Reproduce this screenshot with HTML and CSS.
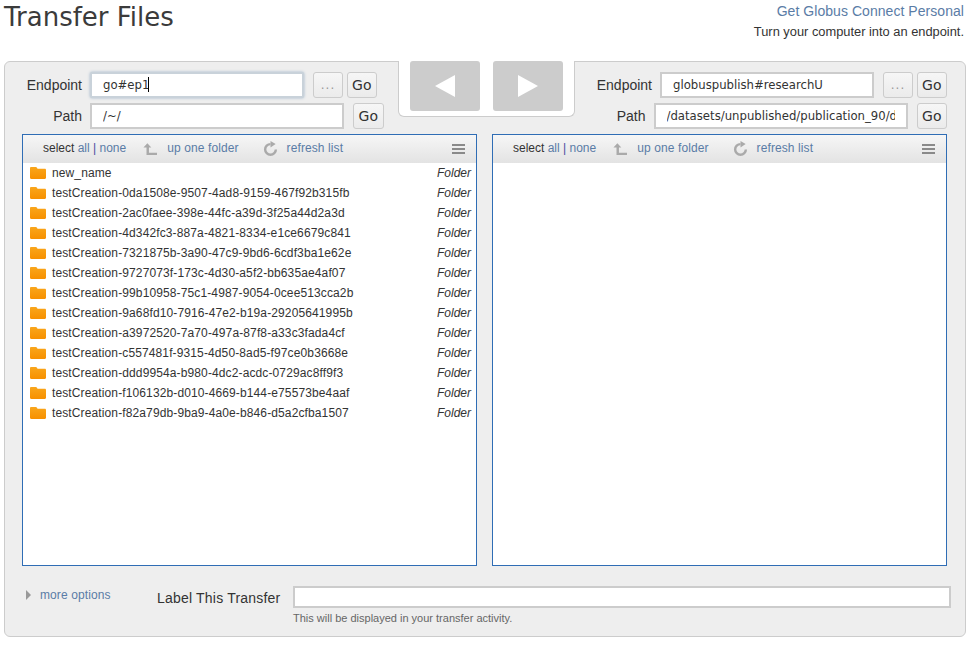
FILE: index.html
```html
<!DOCTYPE html>
<html lang="en">
<head>
    <meta charset="UTF-8">
    <title>Transfer Files</title>
    <link rel="stylesheet" href="styles.css">
</head>
<body>
    <svg class="defs" width="0" height="0">
        <symbol id="i-folder" viewBox="0 0 16 12">
            <defs>
                <linearGradient id="folder-grad" x1="0" y1="0" x2="0" y2="1">
                    <stop offset="0" stop-color="#f9a61c"/>
                    <stop offset="1" stop-color="#f79000"/>
                </linearGradient>
            </defs>
            <path d="M0 1.200C0 .5.5 0 1.200 0h4.600c.6 0 .9.3 1.200.8l.5.9h7.300c.7 0 1.200.5 1.200 1.200v7.900c0 .7-.5 1.200-1.200 1.200H1.200C.5 12 0 11.500 0 10.800z" fill="url(#folder-grad)"/>
        </symbol>
        <symbol id="i-up" viewBox="0 0 16 14">
            <path d="M5 0 9.500 5H6.800v6H16v3H4V5H.5z" fill="#aaa"/>
        </symbol>
        <symbol id="i-refresh" viewBox="0 0 16 16">
            <path d="M8 2A7 7 0 1 0 15 9H12.400A4.400 4.400 0 1 1 8 4.600z" fill="#aaa"/>
            <path d="M8 0l5.500 3.300L8 7z" fill="#aaa"/>
        </symbol>
        <symbol id="i-menu" viewBox="0 0 13 10">
            <path d="M0 0h13v2H0zM0 4h13v2H0zM0 8h13v2H0z" fill="#8a8a8a"/>
        </symbol>
    </svg>

    <header class="page-head">
        <h1>Transfer Files</h1>
        <div class="promo">
            <a href="#">Get Globus Connect Personal</a>
            <p>Turn your computer into an endpoint.</p>
        </div>
    </header>

    <main class="panel">
        <!-- flechas de transferencia -->
        <div class="arrows">
            <button class="arrow-btn"><span class="tri tri-left"></span></button>
            <button class="arrow-btn"><span class="tri tri-right"></span></button>
        </div>

        <div class="columns">
            <!-- lado izquierdo -->
            <section class="side">
                <div class="field-row">
                    <label class="lbl">Endpoint</label>
                    <span class="caret-wrap">
                        <input class="field field-short is-focus" value="go#ep1">
                        <span class="caret"></span>
                    </span>
                    <button class="btn btn-dots">...</button>
                    <button class="btn">Go</button>
                </div>
                <div class="field-row">
                    <label class="lbl">Path</label>
                    <input class="field field-long" value="/~/">
                    <button class="btn">Go</button>
                </div>
                <div class="pane">
                    <div class="pane-bar">
                        <span class="sel">select <a href="#">all</a> <b>|</b> <a href="#">none</a></span>
                        <svg class="ic-up"><use href="#i-up"/></svg>
                        <a class="bar-link" href="#">up one folder</a>
                        <svg class="ic-refresh"><use href="#i-refresh"/></svg>
                        <a class="bar-link link-refresh" href="#">refresh list</a>
                        <svg class="ic-menu"><use href="#i-menu"/></svg>
                    </div>
                    <ul class="files">
                        <li><svg class="ic-folder"><use href="#i-folder"/></svg><span class="name">new_name</span><em>Folder</em></li>
                        <li><svg class="ic-folder"><use href="#i-folder"/></svg><span class="name">testCreation-0da1508e-9507-4ad8-9159-467f92b315fb</span><em>Folder</em></li>
                        <li><svg class="ic-folder"><use href="#i-folder"/></svg><span class="name">testCreation-2ac0faee-398e-44fc-a39d-3f25a44d2a3d</span><em>Folder</em></li>
                        <li><svg class="ic-folder"><use href="#i-folder"/></svg><span class="name">testCreation-4d342fc3-887a-4821-8334-e1ce6679c841</span><em>Folder</em></li>
                        <li><svg class="ic-folder"><use href="#i-folder"/></svg><span class="name">testCreation-7321875b-3a90-47c9-9bd6-6cdf3ba1e62e</span><em>Folder</em></li>
                        <li><svg class="ic-folder"><use href="#i-folder"/></svg><span class="name">testCreation-9727073f-173c-4d30-a5f2-bb635ae4af07</span><em>Folder</em></li>
                        <li><svg class="ic-folder"><use href="#i-folder"/></svg><span class="name">testCreation-99b10958-75c1-4987-9054-0cee513cca2b</span><em>Folder</em></li>
                        <li><svg class="ic-folder"><use href="#i-folder"/></svg><span class="name">testCreation-9a68fd10-7916-47e2-b19a-29205641995b</span><em>Folder</em></li>
                        <li><svg class="ic-folder"><use href="#i-folder"/></svg><span class="name">testCreation-a3972520-7a70-497a-87f8-a33c3fada4cf</span><em>Folder</em></li>
                        <li><svg class="ic-folder"><use href="#i-folder"/></svg><span class="name">testCreation-c557481f-9315-4d50-8ad5-f97ce0b3668e</span><em>Folder</em></li>
                        <li><svg class="ic-folder"><use href="#i-folder"/></svg><span class="name">testCreation-ddd9954a-b980-4dc2-acdc-0729ac8ff9f3</span><em>Folder</em></li>
                        <li><svg class="ic-folder"><use href="#i-folder"/></svg><span class="name">testCreation-f106132b-d010-4669-b144-e75573be4aaf</span><em>Folder</em></li>
                        <li><svg class="ic-folder"><use href="#i-folder"/></svg><span class="name">testCreation-f82a79db-9ba9-4a0e-b846-d5a2cfba1507</span><em>Folder</em></li>
                    </ul>
                </div>
            </section>

            <!-- lado derecho -->
            <section class="side side-right">
                <div class="field-row">
                    <label class="lbl">Endpoint</label>
                    <input class="field field-short" value="globuspublish#researchU">
                    <button class="btn btn-dots">...</button>
                    <button class="btn">Go</button>
                </div>
                <div class="field-row">
                    <label class="lbl">Path</label>
                    <input class="field field-long" value="/datasets/unpublished/publication_90/data">
                    <button class="btn">Go</button>
                </div>
                <div class="pane">
                    <div class="pane-bar">
                        <span class="sel">select <a href="#">all</a> <b>|</b> <a href="#">none</a></span>
                        <svg class="ic-up"><use href="#i-up"/></svg>
                        <a class="bar-link" href="#">up one folder</a>
                        <svg class="ic-refresh"><use href="#i-refresh"/></svg>
                        <a class="bar-link link-refresh" href="#">refresh list</a>
                        <svg class="ic-menu"><use href="#i-menu"/></svg>
                    </div>
                </div>
            </section>
        </div>

        <div class="options-row">
            <a class="more" href="#"><span class="tri-more"></span>more options</a>
            <label class="label-title">Label This Transfer</label>
            <div class="label-box">
                <input class="field field-label">
                <p class="hint">This will be displayed in your transfer activity.</p>
            </div>
        </div>
    </main>
</body>
</html>
```

FILE: styles.css
```css
html, body {
    height: 645px;
    overflow: hidden;
}

body {
    margin: 0;
    background-color: white;
    font-family: "Liberation Sans", Arial, sans-serif;
    font-size: 12px;
    color: #333;
}

a {
    color: #5a7ca6;
    text-decoration: none;
}

.defs {
    position: absolute;
}

.page-head {
    display: flex;
    justify-content: space-between;
    height: 61px;
    padding: 0 9px 0 4px;
}

h1 {
    margin: 0;
    font-family: "DejaVu Sans", sans-serif;
    font-size: 26px;
    font-weight: normal;
    line-height: 34px;
    color: #3b3b3b;
}

.promo {
    text-align: right;
}

.promo a {
    display: block;
    font-size: 14px;
    letter-spacing: .05px;
    line-height: 16px;
    padding-top: 3px;
}

.promo p {
    margin: 5px 0 0;
    font-size: 12.85px;
    line-height: 16px;
    color: #333;
}

.panel {
    position: relative;
    box-sizing: border-box;
    width: 962px;
    height: 576px;
    margin-left: 4px;
    padding: 10px 18px 0 17px;
    background-color: #eee;
    border: 1px solid #ccc;
    border-radius: 6px;
}

.arrows {
    position: absolute;
    top: -1px;
    left: 393px;
    display: flex;
    gap: 13px;
    box-sizing: border-box;
    width: 177px;
    height: 56px;
    padding: 0 11px;
    background-color: white;
    border: 1px solid #ccc;
    border-top: none;
    border-radius: 0 0 6px 6px;
}

.arrow-btn {
    display: flex;
    align-items: center;
    justify-content: center;
    width: 70px;
    height: 50px;
    padding: 0;
    background-color: #ccc;
    border: none;
    border-radius: 3px;
}

.tri {
    width: 0;
    height: 0;
    border-top: 11px solid transparent;
    border-bottom: 11px solid transparent;
}

.tri-left {
    border-right: 20px solid white;
}

.tri-right {
    border-left: 20px solid white;
}

.columns {
    display: flex;
    gap: 15px;
}

.side {
    width: 455px;
}

.field-row {
    display: flex;
    align-items: center;
    height: 26px;
    margin-bottom: 5px;
}

.side-right .field-row {
    justify-content: flex-end;
}

.lbl {
    width: 60px;
    margin-right: 8px;
    font-size: 14px;
    text-align: right;
    color: #333;
}

.side-right .lbl {
    width: auto;
}

.field {
    box-sizing: border-box;
    height: 26px;
    padding: 0 11px;
    font-family: "DejaVu Sans", sans-serif;
    font-size: 11.7px;
    color: #333;
    background-color: white;
    border: 2px solid #ccc;
    border-radius: 0;
    outline: none;
}

.field-short {
    width: 214px;
}

.field-long {
    width: 254px;
}

.is-focus {
    display: block;
    border-color: #c9d2da;
    border-radius: 2px;
    box-shadow: 0 0 3px #9fb4c8;
}

.caret-wrap {
    position: relative;
}

.caret {
    position: absolute;
    top: 5px;
    left: 58px;
    width: 1px;
    height: 15px;
    background-color: black;
}

.btn {
    box-sizing: border-box;
    width: 30.5px;
    height: 26px;
    margin-left: 9px;
    padding: 0;
    font-family: "DejaVu Sans", sans-serif;
    font-size: 14px;
    color: #333;
    background: linear-gradient(#f6f6f6, #ebebeb);
    border: 1px solid #ccc;
    border-radius: 3px;
}

.btn-dots {
    width: 30px;
    font-size: 12px;
    letter-spacing: 1px;
    color: #999;
}

.btn-dots + .btn {
    margin-left: 3.5px;
}

.pane {
    box-sizing: border-box;
    height: 432px;
    background-color: white;
    border: 1px solid #2f6db5;
}

.pane-bar {
    display: flex;
    align-items: center;
    height: 28px;
    padding: 0 11px 0 20px;
    background: linear-gradient(#f6f6f6, #e3e3e3);
}

.sel {
    margin-bottom: 2px;
    color: #333;
}

.sel b {
    font-weight: normal;
    color: #4a4aa0;
}

.ic-up {
    width: 14px;
    height: 12.5px;
    margin-left: 17px;
}

.bar-link {
    margin-bottom: 2px;
    margin-left: 10px;
    letter-spacing: .1px;
}

.ic-refresh {
    width: 15px;
    height: 15px;
    margin-left: 24px;
    margin-bottom: 1px;
}

.link-refresh {
    margin-left: 9px;
}

.ic-menu {
    width: 13px;
    height: 10px;
    margin-left: auto;
}

.files {
    margin: 0;
    padding: 0;
    list-style: none;
}

.files li {
    display: flex;
    align-items: center;
    height: 20px;
    padding: 0 5px 0 7px;
}

.ic-folder {
    flex: none;
    width: 16px;
    height: 12px;
    margin-right: 6px;
}

.name {
    flex: 1;
    letter-spacing: .12px;
}

.files em {
    color: #333;
}

.options-row {
    display: flex;
    margin-top: 20px;
    padding-left: 4px;
}

.more {
    display: flex;
    align-items: center;
    align-self: flex-start;
    width: 131px;
    height: 18px;
    letter-spacing: .1px;
}

.tri-more {
    width: 0;
    height: 0;
    margin-right: 9px;
    border-top: 5px solid transparent;
    border-bottom: 5px solid transparent;
    border-left: 5px solid #999;
}

.label-title {
    width: 136px;
    font-size: 14px;
    letter-spacing: .2px;
    line-height: 24px;
    color: #333;
}

.label-box {
    flex: none;
}

.field-label {
    display: block;
    width: 658px;
    height: 22px;
    margin-right: -20px;
}

.hint {
    margin: 4px 0 0;
    font-size: 11px;
    color: #666;
}
```
